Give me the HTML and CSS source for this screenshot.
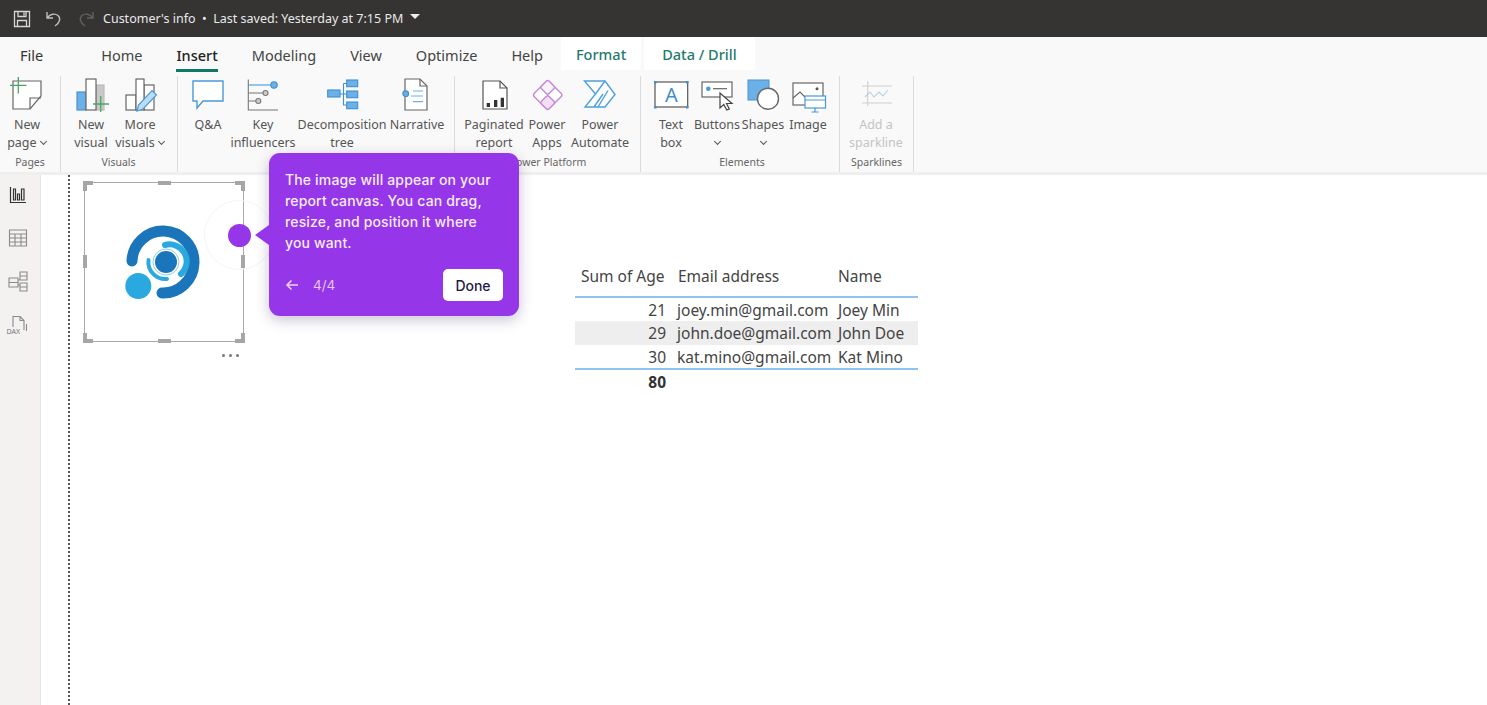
FILE: index.html
```html
<!DOCTYPE html>
<html lang="en">
<head>
    <meta charset="UTF-8">
    <meta name="viewport" content="width=device-width, initial-scale=1.0">
    <title>Customer's info</title>
    <link rel="stylesheet" href="styles.css">
</head>
<body>
<div class="app">
    <div class="titlebar">
        <svg class="qa-icon" width="20" height="20" viewBox="0 0 20 20" fill="none" stroke="#d6d6d6" stroke-width="1.3"><path d="M2.5 2.5h15v15h-15zM6 2.5v5h8v-5M5.500 17.500v-6h9v6M12 3.500v3"/></svg>
        <svg class="qa-icon undo" width="20" height="20" viewBox="0 0 20 20" fill="none" stroke="#bdbdbd" stroke-width="1.4"><path d="M3 3v6h6M3.500 8.500C6 5 11 4 14 6.500c3 2.800 2 7-3 10.500"/></svg>
        <svg class="qa-icon redo" width="20" height="20" viewBox="0 0 20 20" fill="none" stroke="#5f5f5f" stroke-width="1.4"><path d="M17 3v6h-6M16.500 8.500C14 5 9 4 6 6.500c-3 2.800-2 7 3 10.500"/></svg>
        <span class="doc-title">Customer's info &nbsp;•&nbsp; Last saved: Yesterday at 7:15 PM</span>
        <span class="caret"></span>
    </div>

    <div class="tabs">
        <span class="tab tab-file">File</span>
        <span class="tab">Home</span>
        <span class="tab active">Insert</span>
        <span class="tab">Modeling</span>
        <span class="tab">View</span>
        <span class="tab">Optimize</span>
        <span class="tab">Help</span>
        <span class="tab ctx ctx-format">Format</span>
        <span class="tab ctx ctx-data">Data / Drill</span>
    </div>

    <div class="ribbon">
        <div class="group g-pages">
            <div class="items">
                <div class="item w42">
                    <svg width="36" height="36" viewBox="0 0 36 36" fill="#fff" stroke="#666" stroke-width="1.2"><path d="M4 4h28v15L21 32H4z"/><path d="M21 32V21h11" fill="none"/><path d="M9.300 0v16.500M1 8.300h16.500" stroke="#4aa564" stroke-width="1.300"/></svg>
                    <span class="lbl">New<br>page <i class="chev"></i></span>
                </div>
            </div>
            <div class="gname">Pages</div>
        </div>
        <div class="group g-visuals">
            <div class="items">
                <div class="item w50">
                    <svg width="36" height="36" viewBox="0 0 36 36" stroke="#666" stroke-width="1.200"><rect x="4" y="15" width="9" height="18" fill="#6cb0e8" stroke="#4a94d0"/><rect x="23" y="8" width="8" height="25" fill="#c8c8c8" stroke="#bbb"/><rect x="13" y="2" width="10" height="31" fill="#fff"/><path d="M27.700 19v16M20 27h16" stroke="#4aa564" stroke-width="1.300"/></svg>
                    <span class="lbl">New<br>visual</span>
                </div>
                <div class="item w48">
                    <svg width="36" height="36" viewBox="0 0 36 36" fill="#fff" stroke="#666" stroke-width="1.200"><rect x="4" y="18" width="10" height="15"/><rect x="22" y="8" width="10" height="25"/><rect x="14" y="2" width="8" height="31"/><path d="M15 34l1.500-6L30 13.500l4.500 4.500L21 32z" fill="#bcdcf5" stroke="#4a9ad4"/></svg>
                    <span class="lbl">More<br>visuals <i class="chev"></i></span>
                </div>
            </div>
            <div class="gname">Visuals</div>
        </div>
        <div class="group g-insights">
            <div class="items">
                <div class="item w40">
                    <svg width="36" height="36" viewBox="0 0 36 36" fill="#fff" stroke="#4a9ad4" stroke-width="1.400"><path d="M3 4h30v20H13l-6 7v-7H3z"/></svg>
                    <span class="lbl">Q&amp;A</span>
                </div>
                <div class="item w70">
                    <svg width="36" height="36" viewBox="0 0 36 36" fill="none" stroke="#777" stroke-width="1.100"><path d="M3.300 2.500V33H33"/><path d="M3.300 8H26" stroke="#4a9ad4"/><path d="M3.300 16H18M3.300 24H11"/><circle cx="29" cy="8" r="3.200" fill="#6cb0e8" stroke="#3f8fcf"/><circle cx="20.500" cy="16" r="2.500" fill="#ccc"/><circle cx="13.300" cy="24" r="2.500" fill="#ccc"/></svg>
                    <span class="lbl">Key<br>influencers</span>
                </div>
                <div class="item w88">
                    <svg width="36" height="36" viewBox="0 0 36 36" fill="#6cb0e8" stroke="#3f8fcf" stroke-width="1.100"><rect x="3.700" y="13" width="12.300" height="7"/><rect x="22.700" y="3" width="11" height="6.700"/><rect x="22.700" y="14" width="11" height="6.700"/><rect x="22.700" y="25" width="11" height="6.700"/><path d="M16 17h6.700M19.500 6.500v21.500h3.200M19.500 6.500h3.200" fill="none"/></svg>
                    <span class="lbl">Decomposition<br>tree</span>
                </div>
                <div class="item w62">
                    <svg width="36" height="36" viewBox="0 0 36 36" fill="#fff" stroke="#666" stroke-width="1.200"><path d="M6 2h15l7 7v24H6z"/><path d="M21 2v7h7" fill="none"/><circle cx="6.700" cy="16.700" r="2.800" fill="#6cb0e8" stroke="#3f8fcf"/><path d="M14 14h10M12 19h12M14 24.700h10" stroke="#6cb0e8"/></svg>
                    <span class="lbl">Narrative</span>
                </div>
            </div>
            <div class="gname"></div>
        </div>
        <div class="group g-platform">
            <div class="items">
                <div class="item w64">
                    <svg width="36" height="36" viewBox="0 0 36 36" fill="#fff" stroke="#555" stroke-width="1.200"><path d="M7 4h17l7 7v21H7z"/><path d="M24 4v7h7" fill="none"/><path d="M10.700 26h3.300v4h-3.300zM18 23h3.300v7H18zM24.700 20.700H28V30h-3.300z" fill="#333" stroke="none"/></svg>
                    <span class="lbl">Paginated<br>report</span>
                </div>
                <div class="item w42">
                    <svg width="36" height="36" viewBox="0 0 36 36" fill="#fff" stroke="#c58ad4" stroke-width="1.400"><g transform="rotate(45 18.700 18)"><rect x="8" y="7.300" width="21.400" height="21.400" rx="2.500"/><rect x="8" y="7.300" width="10.700" height="10.700" rx="2" fill="#fbf3fc"/><rect x="18.700" y="18" width="10.700" height="10.700" rx="2" fill="#f2dff5"/></g></svg>
                    <span class="lbl">Power<br>Apps</span>
                </div>
                <div class="item w64">
                    <svg width="36" height="36" viewBox="0 0 36 36" fill="#fff" stroke="#4aa0e0" stroke-width="1.400"><path d="M2.500 4H23l10 13.500L23 30H3l10.500-13z"/><path d="M13.500 17L23 4M21 17l-9 13M26 13.500L16 30M29 13" fill="none"/></svg>
                    <span class="lbl">Power<br>Automate</span>
                </div>
            </div>
            <div class="gname">Power Platform</div>
        </div>
        <div class="group g-elements">
            <div class="items">
                <div class="item w40">
                    <svg width="36" height="36" viewBox="0 0 36 36"><rect x="2" y="5" width="32.700" height="25" fill="#fff" stroke="#555" stroke-width="1.200"/><path d="M1 4h2.500v2.500H1zM33 4h2.500v2.500H33zM1 29h2.500v2.500H1zM33 29h2.500v2.500H33z" fill="#3f8fcf"/><text x="18.300" y="25" class="svg-a">A</text></svg>
                    <span class="lbl">Text<br>box</span>
                </div>
                <div class="item w52">
                    <svg width="36" height="36" viewBox="0 0 36 36" fill="#fff" stroke="#666" stroke-width="1.200"><rect x="3" y="5" width="30" height="15"/><circle cx="9.300" cy="11.700" r="2.300" fill="#4a9ad4" stroke="none"/><path d="M14 11.700h14"/><path d="M21 16v15l3.800-3.500 3 5.500 2.500-1-2.800-5.500H33z" stroke="#444"/></svg>
                    <span class="lbl">Buttons<br><i class="chev"></i></span>
                </div>
                <div class="item w40">
                    <svg width="36" height="36" viewBox="0 0 36 36"><rect x="3" y="3" width="21" height="20" fill="#6cb0e8" stroke="#4a94d0"/><circle cx="23" cy="21.700" r="10.500" fill="#fff" stroke="#666" stroke-width="1.400"/></svg>
                    <span class="lbl">Shapes<br><i class="chev"></i></span>
                </div>
                <div class="item w50">
                    <svg width="36" height="36" viewBox="0 0 36 36" fill="#fff" stroke="#666" stroke-width="1.200"><rect x="3" y="6" width="30" height="22"/><path d="M3 21l7-6 6 6" fill="none"/><circle cx="27" cy="11.700" r="1.500" fill="#555" stroke="none"/><rect x="15" y="19" width="20.500" height="12" fill="#fff" stroke="#4a9ad4"/><path d="M15 23h20.500M25 31v4M21.500 35h7" fill="none" stroke="#4a9ad4"/></svg>
                    <span class="lbl">Image</span>
                </div>
            </div>
            <div class="gname">Elements</div>
        </div>
        <div class="group g-spark">
            <div class="items">
                <div class="item w60 disabled">
                    <svg width="36" height="36" viewBox="0 0 36 36" fill="none" stroke="#cfcfcf" stroke-width="1.100"><path d="M4 9h30M4 26h30M9.700 4v25"/><path d="M7 20l5-5 4 5 5-5 4 4 5-6" stroke="#b9cfe0"/></svg>
                    <span class="lbl">Add a<br>sparkline</span>
                </div>
            </div>
            <div class="gname">Sparklines</div>
        </div>
    </div>

    <div class="main">
        <div class="rail">
            <svg class="rail-icon" width="20" height="20" viewBox="0 0 20 20" fill="none" stroke="#333" stroke-width="1.200"><path d="M2.500 2v15.500H18M5.500 4h2v11h-2zM9.500 9h2v6h-2zM13.500 4h2.500v11h-2.500z"/></svg>
            <svg class="rail-icon" width="20" height="20" viewBox="0 0 20 20" fill="none" stroke="#8a8a8a" stroke-width="1.100"><path d="M1.500 2h17v16h-17zM1.500 6h17M1.500 10h17M1.500 14h17M7 6v12M13 6v12"/></svg>
            <svg class="rail-icon" width="20" height="22" viewBox="0 0 20 22" fill="none" stroke="#8a8a8a" stroke-width="1.100"><path d="M1 7h9v9H1zM1 11.500h9M12 1h7v8h-7zM12 5h7M12 12h7v8h-7zM12 16h7M10 9h2M10 14h2"/></svg>
            <div class="dax">
                <svg width="20" height="20" viewBox="0 0 20 20" fill="none" stroke="#8a8a8a" stroke-width="1.100"><path d="M5 12V1.500h7l4 4V15M12 1.500v4h4M18.500 9v7"/></svg>
                <span class="dax-txt">DAX</span>
            </div>
        </div>

        <div class="canvas">
            <div class="dotted"></div>

            <div class="image-visual">
                <span class="hd tl"></span><span class="hd tm"></span><span class="hd tr"></span>
                <span class="hd ml"></span><span class="hd mr"></span>
                <span class="hd bl"></span><span class="hd bm"></span><span class="hd br"></span>
                <svg class="logo" width="80" height="80" viewBox="0 0 80 80" fill="none">
                    <path d="M6 39A31 31 0 1 1 36 71" stroke="#1b75bb" stroke-width="11" stroke-linecap="round"/>
                    <path d="M39 23A17 17 0 0 1 55 52" stroke="#29a9e0" stroke-width="6" stroke-linecap="round"/>
                    <path d="M22.500 38A17 17 0 0 0 41 57" stroke="#29a9e0" stroke-width="4" stroke-linecap="round"/>
                    <circle cx="40" cy="40" r="13" stroke="#8ccdeb" stroke-width="1"/>
                    <circle cx="40" cy="40" r="11" fill="#1b75bb"/>
                    <circle cx="12.300" cy="64" r="13" fill="#29a9e0"/>
                </svg>
            </div>
            <div class="more-dots"><i></i><i></i><i></i></div>

            <table class="data-table">
                <thead>
                    <tr><th class="age">Sum of Age</th><th class="email">Email address</th><th class="name">Name</th></tr>
                </thead>
                <tbody>
                    <tr><td class="age">21</td><td class="email">joey.min@gmail.com</td><td class="name">Joey Min</td></tr>
                    <tr class="alt"><td class="age">29</td><td class="email">john.doe@gmail.com</td><td class="name">John Doe</td></tr>
                    <tr><td class="age">30</td><td class="email">kat.mino@gmail.com</td><td class="name">Kat Mino</td></tr>
                </tbody>
                <tfoot>
                    <tr><td class="age">80</td><td></td><td></td></tr>
                </tfoot>
            </table>
        </div>
    </div>

    <div class="halo"></div>
    <div class="marker"></div>
    <div class="tip">
        <span class="tip-arrow"></span>
        <p class="tip-text">The image will appear on your report canvas. You can drag, resize, and position it where you want.</p>
        <div class="tip-foot">
            <svg class="tip-back" width="14" height="12" viewBox="0 0 14 12" fill="none" stroke="#ecd2fb" stroke-width="1.600"><path d="M13 6H2M6.500 1.500L2 6l4.500 4.500"/></svg>
            <span class="tip-count">4/4</span>
            <button class="tip-done">Done</button>
        </div>
    </div>
</div>
</body>
</html>
```

FILE: styles.css
```css
* {
    box-sizing: border-box;
}
body {
    margin: 0;
    font-family: "Noto Sans", "Open Sans", sans-serif;
    background: #fff;
    color: #333;
}
.app {
    position: relative;
    width: 1487px;
    height: 705px;
    overflow: hidden;
    display: flex;
    flex-direction: column;
}

/* title bar */
.titlebar {
    height: 37px;
    flex: none;
    background: #353433;
    color: #e9e9e9;
    display: flex;
    align-items: center;
    padding-left: 12px;
    font-size: 12.5px;
}
.qa-icon {
    margin-right: 12px;
}
.qa-icon.redo {
    margin-right: 7px;
}
.caret {
    margin-left: 7px;
    margin-bottom: 4px;
    border-left: 5px solid transparent;
    border-right: 5px solid transparent;
    border-top: 5px solid #eee;
}

/* tabs */
.tabs {
    height: 35px;
    flex: none;
    background: #f9f9f9;
    display: flex;
    align-items: stretch;
    padding-left: 3px;
    font-size: 14.500px;
    color: #444;
}
.tab {
    padding: 0 17px;
    display: flex;
    align-items: center;
    position: relative;
}
.tab-file {
    margin-right: 24px;
    color: #333;
}
.tab.active {
    color: #222;
    font-weight: 500;
}
.tab.active::after {
    content: "";
    position: absolute;
    left: 17px;
    right: 17px;
    bottom: 0;
    height: 3px;
    background: #117865;
}
.ctx {
    background: #fff;
    color: #1f7a6b;
    font-weight: 500;
    height: 33px;
}
.ctx-format {
    padding: 0 15px;
    margin-left: 1px;
}
.ctx-data {
    padding: 0 18px;
    margin-left: 3px;
}

/* ribbon */
.ribbon {
    height: 103px;
    flex: none;
    background: #f9f9f9;
    display: flex;
    padding-top: 4px;
    border-bottom: 3px solid #efefef;
    font-size: 12.500px;
    color: #555;
}
.group {
    display: flex;
    flex-direction: column;
    border-right: 1px solid #dcdcdc;
    height: 96px;
    flex: none;
}
.g-pages { width: 61px; padding-left: 6px; }
.g-visuals { width: 117px; padding-left: 5px; }
.g-insights { width: 277px; padding-left: 10px; }
.g-platform { width: 186px; padding-left: 7px; }
.g-elements { width: 199px; padding-left: 10px; }
.g-spark { width: 74px; padding-left: 6px; }
.items {
    display: flex;
    flex: 1;
}
.item {
    flex: none;
    display: flex;
    flex-direction: column;
    align-items: center;
    text-align: center;
    line-height: 18px;
    white-space: nowrap;
}
.item svg {
    display: block;
    margin-top: 1px;
    margin-bottom: 1px;
    overflow: visible;
}
.item .lbl {
    margin-top: 2px;
}
.w40 { width: 40px; }
.w42 { width: 42px; }
.w48 { width: 48px; }
.w50 { width: 50px; }
.w52 { width: 52px; }
.w60 { width: 60px; }
.w62 { width: 62px; }
.w64 { width: 64px; }
.w70 { width: 70px; }
.w88 { width: 88px; }
.disabled {
    color: #c4c4c4;
}
.chev {
    display: inline-block;
    width: 5px;
    height: 5px;
    border-right: 1.200px solid #555;
    border-bottom: 1.200px solid #555;
    transform: rotate(45deg);
    margin: 0 1px 3px 1px;
}
.gname {
    height: 18px;
    line-height: 16px;
    text-align: center;
    font-size: 10.500px;
    color: #666;
    margin-left: -6px;
}
.svg-a {
    font-family: "Noto Sans", sans-serif;
    font-size: 20px;
    fill: #3f8fcf;
    text-anchor: middle;
}

/* left rail + canvas */
.main {
    flex: 1;
    display: flex;
    min-height: 0;
}
.rail {
    width: 41px;
    flex: none;
    background: #f3f2f1;
    border-right: 1px solid #e4e4e4;
    display: flex;
    flex-direction: column;
    align-items: center;
    padding-top: 10px;
    gap: 23px;
    padding-right: 5px;
}
.dax {
    position: relative;
    height: 20px;
    margin-top: -1px;
}
.dax-txt {
    position: absolute;
    left: -1px;
    bottom: -1px;
    font-size: 7px;
    line-height: 8px;
    color: #777;
    background: #f3f2f1;
}
.canvas {
    flex: 1;
    position: relative;
    background: #fff;
}
.dotted {
    position: absolute;
    left: 27px;
    top: 0;
    bottom: 0;
    border-left: 2px dotted #555;
}

/* selected image */
.image-visual {
    position: absolute;
    left: 43px;
    top: 7px;
    width: 160px;
    height: 160px;
    border: 1.500px solid #aaa;
    display: flex;
    align-items: center;
    justify-content: center;
}
.logo {
    margin-left: 3px;
    overflow: visible;
}
.hd {
    position: absolute;
    background: #a6a6a6;
}
.tm, .bm {
    width: 13px;
    height: 4px;
    left: 73px;
}
.tm { top: -2px; }
.bm { bottom: -2px; }
.ml, .mr {
    width: 4px;
    height: 13px;
    top: 72px;
}
.ml { left: -2px; }
.mr { right: -2px; }
.tl, .tr, .bl, .br {
    width: 10px;
    height: 10px;
    border: 0 solid #a6a6a6;
    background: none;
}
.tl { left: -2px; top: -2px; border-width: 4px 0 0 4px; }
.tr { right: -2px; top: -2px; border-width: 4px 4px 0 0; }
.bl { left: -2px; bottom: -2px; border-width: 0 0 4px 4px; }
.br { right: -2px; bottom: -2px; border-width: 0 4px 4px 0; }
.more-dots {
    position: absolute;
    left: 181px;
    top: 179px;
    display: flex;
    gap: 4px;
}
.more-dots i {
    width: 3px;
    height: 3px;
    border-radius: 50%;
    background: #777;
}

/* table visual */
.data-table {
    position: absolute;
    left: 534px;
    top: 86px;
    width: 343px;
    border-collapse: collapse;
    table-layout: fixed;
    font-size: 15.500px;
    color: #444;
}
.data-table th {
    font-weight: 400;
    height: 36px;
    text-align: left;
    border-bottom: 2px solid #90c4f0;
    padding: 0 0 5px 0;
    vertical-align: middle;
}
.data-table td {
    height: 24px;
    padding: 0;
    white-space: nowrap;
}
.data-table .age {
    width: 91px;
    text-align: right;
    padding-right: 0;
}
.data-table .email {
    width: 165px;
    padding-left: 11px;
}
.data-table .name {
    padding-left: 7px;
}
.data-table th.age {
    padding-left: 6px;
    text-align: left;
}
.data-table th.email {
    padding-left: 12px;
}
.data-table .alt {
    background: #eeeeee;
}
.data-table tfoot td {
    border-top: 2px solid #90c4f0;
    font-weight: 700;
    color: #333;
}

/* tour tooltip */
.halo {
    position: absolute;
    left: 204px;
    top: 200px;
    width: 70px;
    height: 70px;
    border-radius: 50%;
    border: 1px solid #f5f5f5;
}
.marker {
    position: absolute;
    left: 228px;
    top: 224px;
    width: 23px;
    height: 23px;
    border-radius: 50%;
    background: #9536e8;
}
.tip {
    position: absolute;
    left: 269px;
    top: 153px;
    width: 250px;
    height: 163px;
    background: #9536e8;
    border-radius: 11px;
    padding: 16px;
    color: #f6ecfd;
    box-shadow: 0 4px 14px rgba(60, 40, 110, 0.28);
    font-family: Inter, "Noto Sans", sans-serif;
}
.tip-arrow {
    position: absolute;
    left: -14px;
    top: 72px;
    border-top: 10px solid transparent;
    border-bottom: 10px solid transparent;
    border-right: 14px solid #9536e8;
}
.tip-text {
    margin: 0;
    font-size: 14px;
    line-height: 21px;
    font-weight: 500;
    letter-spacing: 0.15px;
}
.tip-foot {
    display: flex;
    align-items: center;
    margin-top: 16px;
}
.tip-back {
    margin-right: 14px;
}
.tip-count {
    font-size: 13.500px;
    color: #e4c6fa;
}
.tip-done {
    margin-left: auto;
    width: 60px;
    height: 32px;
    border: none;
    border-radius: 5px;
    background: #fff;
    color: #1f1a44;
    font-family: inherit;
    font-size: 14px;
    font-weight: 500;
    padding: 0;
}
```
